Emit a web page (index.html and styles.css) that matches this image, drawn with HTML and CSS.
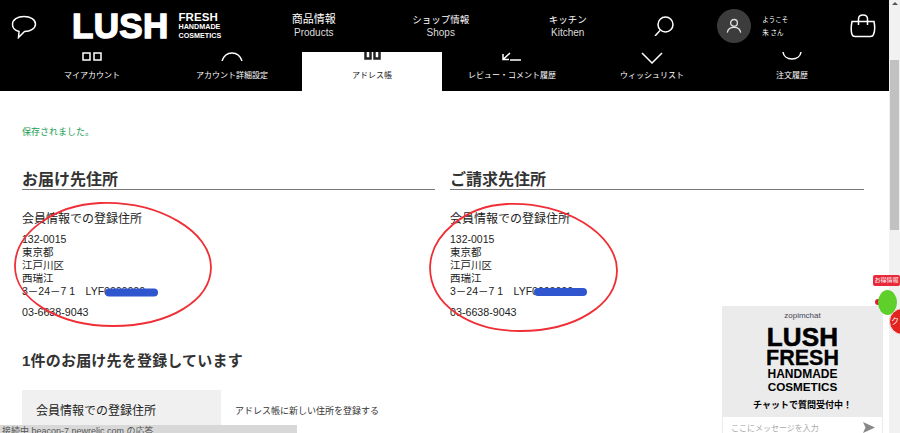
FILE: index.html
```html
<!DOCTYPE html>
<html lang="ja">
<head>
<meta charset="utf-8">
<title>アドレス帳</title>
<link rel="stylesheet" href="styles.css">
</head>
<body>
<div class="page">
  <main class="main">
    <header class="topbar">
      <svg class="ico-chat" viewBox="0 0 26 24"><path d="M13 1.5C6.500 1.5 1.500 4.500 1.500 9.500c0 3.500 2.500 6 6.500 7l-.5 6 6-6c6 0 11-3 11-7.500 0-4.500-5-7.500-11.500-7.500z"/></svg>
      <div class="logo">
        <span class="logo-lush">LUSH</span>
        <span class="logo-sub"><b class="l1">FRESH</b><b class="l2">HANDMADE</b><b class="l3">COSMETICS</b></span>
      </div>
      <nav class="gnav">
        <a class="gnav-item"><b>商品情報</b><span>Products</span></a>
        <a class="gnav-item"><b>ショップ情報</b><span>Shops</span></a>
        <a class="gnav-item"><b>キッチン</b><span>Kitchen</span></a>
      </nav>
      <svg class="ico-search" viewBox="0 0 20 20"><circle cx="11.500" cy="8.500" r="7.500"/><path d="M6 14.500L1 20"/></svg>
      <div class="user">
        <span class="avatar"><svg viewBox="0 0 18 18"><circle cx="9" cy="5.500" r="3.800"/><path d="M1.500 16.500c.5-4 3.500-6 7.500-6s7 2 7.500 6"/></svg></span>
        <span class="hello">ようこそ<br>朱 さん</span>
      </div>
      <svg class="ico-bag" viewBox="0 0 26 24"><path d="M2 7.500h22c1 5 .8 10-.5 13-.5 1.500-1.500 2-3 2H5c-1.500 0-2.500-.5-3-2-1-3-1-8 0-13z"/><path d="M8.500 11V5c0-2.500 2-4 4.500-4s4.500 1.500 4.500 4v6"/></svg>
    </header>
    <nav class="subnav">
      <a class="tab"><span class="tab-ico"><svg viewBox="0 0 20 9" width="20" height="9"><rect x="1" y="1" width="7" height="7"/><rect x="12" y="1" width="7" height="7"/></svg></span>マイアカウント</a>
      <a class="tab"><span class="tab-ico"><svg viewBox="0 0 22 9" width="22" height="9"><path d="M1 9C3 3 7 1 11 1s8 2 10 8"/></svg></span>アカウント詳細設定</a>
      <a class="tab tab-on"><span class="tab-ico"><svg class="thick" viewBox="0 0 17 8" width="17" height="8"><path d="M1.500 0v6.500h5V0M10.500 0v6.500h5V0"/></svg></span>アドレス帳</a>
      <a class="tab"><span class="tab-ico"><svg viewBox="0 0 20 9" width="20" height="9"><path d="M1 7.500L8 1M1 2v5.500h6M8 8h11"/></svg></span>レビュー・コメント履歴</a>
      <a class="tab"><span class="tab-ico"><svg viewBox="0 0 22 12" width="22" height="12"><path d="M1 1l10 10L21 1"/></svg></span>ウィッシュリスト</a>
      <a class="tab"><span class="tab-ico"><svg viewBox="0 0 20 9" width="20" height="9"><path d="M1 0c.5 4 4 7 9 7s8.500-3 9-7"/></svg></span>注文履歴</a>
    </nav>
    <section class="content">
      <p class="saved">保存されました。</p>
      <div class="cols">
        <div class="col">
          <h2 class="col-title">お届け先住所</h2>
          <h3 class="addr-title">会員情報での登録住所</h3>
          <p class="addr">132-0015<br>東京都<br>江戸川区<br>西瑞江<br>3－24－7 1　LYF0000000</p>
          <p class="tel">03-6638-9043</p>
        </div>
        <div class="col">
          <h2 class="col-title">ご請求先住所</h2>
          <h3 class="addr-title">会員情報での登録住所</h3>
          <p class="addr">132-0015<br>東京都<br>江戸川区<br>西瑞江<br>3－24－7 1　LYF0000000</p>
          <p class="tel">03-6638-9043</p>
        </div>
      </div>
      <h2 class="count">1件のお届け先を登録しています</h2>
      <div class="book">
        <div class="book-card">会員情報での登録住所</div>
        <p class="book-add">アドレス帳に新しい住所を登録する</p>
      </div>
    </section>
  </main>
  <div class="scrollbar">
    <span class="sb-arrow"></span>
    <span class="sb-thumb"></span>
  </div>

  <svg class="marks" viewBox="0 0 900 433">
    <path class="mark-blue" d="M109 292.500h45"/>
    <path class="mark-blue" d="M538 292h45"/>
    <path class="mark-red" d="M100 203C55 205 16 232 15 265c-1 35 45 61 98 61 57 0 98-26 98-59 0-35-51-66-111-64z"/>
    <path class="mark-red" d="M507 204c-42 2-76 31-77 63 0 38 40 64 90 64 55 0 97-26 97-61 0-35-52-69-110-66z"/>
  </svg>

  <aside class="chat">
    <div class="chat-brand">zopimchat</div>
    <div class="chat-logo"><b class="c1">LUSH</b><b class="c2">FRESH</b><b class="c3">HANDMADE</b><b class="c4">COSMETICS</b></div>
    <div class="chat-msg">チャットで質問受付中！</div>
    <div class="chat-input"><span>ここにメッセージを入力</span><svg viewBox="0 0 12 11" width="12" height="11"><path d="M0 0l12 5.500L0 11l2.500-5.500z"/></svg></div>
  </aside>

  <div class="promo">
    <span class="promo-tag">お得情報</span>
    <span class="promo-dot"></span>
    <span class="promo-body"></span>
    <span class="promo-coin">ク</span>
  </div>

  <div class="status">接続中 beacon-7.newrelic.com の応答...</div>
</div>
</body>
</html>
```
FILE: styles.css
```css
* { box-sizing: border-box; }
html, body { margin: 0; height: 100%; overflow: hidden; }
body {
  background: #fff;
  color: #222;
  font-family: "Liberation Sans", "Noto Sans CJK JP", sans-serif;
}
.page { position: relative; display: flex; width: 900px; height: 433px; overflow: hidden; }
.main { width: 889px; flex: none; }

.topbar {
  height: 52px;
  background: #000;
  display: flex;
  align-items: center;
  padding-left: 11px;
  color: #fff;
}
svg { display: block; }
.topbar svg, .tab-ico svg { fill: none; stroke: currentColor; stroke-width: 1.5; }
.ico-chat { width: 26px; height: 24px; margin-top: 2px; }
.logo { display: flex; align-items: center; margin-left: 35px; gap: 10px; }
.logo-lush { font-size: 35px; line-height: 26px; font-weight: 700; letter-spacing: .3px; -webkit-text-stroke: 1.400px #fff; }
.logo-sub { display: flex; flex-direction: column; }
.logo-sub b { display: block; line-height: 8.500px; }
.logo-sub .l1 { font-size: 11.500px; line-height: 11px; letter-spacing: .1px; }
.logo-sub .l2, .logo-sub .l3 { font-size: 7.200px; }
.gnav { display: flex; margin-left: 29px; }
.gnav-item {
  width: 127px;
  display: flex;
  flex-direction: column;
  align-items: center;
  font-size: 9.500px;
  line-height: 13px;
}
.gnav-item b { font-weight: 400; }
.gnav-item:first-child b { font-size: 11px; }
.gnav-item span { color: #ddd; font-size: 10px; }
.ico-search { width: 20px; height: 20px; margin-left: 23px; }
.user { display: flex; align-items: center; margin-left: 43px; gap: 11px; }
.avatar {
  width: 34px; height: 34px;
  border-radius: 50%;
  background: #3c3c3c;
  display: flex; align-items: center; justify-content: center;
}
.avatar svg { width: 16px; height: 16px; stroke: #ddd; }
.hello { font-size: 6.500px; line-height: 13px; }
.ico-bag { width: 26px; height: 24px; margin-left: auto; margin-right: 13px; }

.subnav {
  height: 39px;
  background: #000;
  display: flex;
  padding-left: 22px;
}
.tab {
  width: 140px;
  display: flex;
  flex-direction: column;
  align-items: center;
  color: #fff;
  font-size: 8px;
  line-height: 12px;
}
.tab-ico { height: 10px; margin-bottom: 8px; display: flex; align-items: flex-start; overflow: visible; }
.tab-on { background: #fff; color: #222; }
.tab-ico .thick { stroke-width: 2.500; }

.content { padding: 34px 25px 0 22px; }
.saved { margin: 0; color: #1a9e50; font-size: 9px; line-height: 14px; }
.cols { display: grid; grid-template-columns: 413px 414px; column-gap: 15px; margin-top: 29px; }
.col-title {
  margin: 0;
  height: 22px;
  padding-top: 2px;
  border-bottom: 1px solid #777;
  font-size: 16px;
  line-height: 20px;
  font-weight: 700;
  color: #333;
}
.addr-title { margin: 20px 0 0; font-size: 12px; line-height: 18px; font-weight: 400; }
.addr { margin: 5px 0 0; font-size: 10.500px; line-height: 13px; }
.tel { margin: 8px 0 0; font-size: 10.700px; line-height: 13px; }
.count { margin: 32px 0 0; font-size: 15px; line-height: 20px; font-weight: 700; color: #333; letter-spacing: .2px; }
.book { display: flex; align-items: flex-start; margin-top: 19px; gap: 14px; }
.book-card {
  width: 199px;
  height: 60px;
  background: #f0f0f0;
  padding: 12px 14px;
  font-size: 12px;
  line-height: 18px;
}
.book-add { margin: 14px 0 0; font-size: 9px; line-height: 14px; color: #333; }

.scrollbar {
  flex: none;
  width: 11px;
  background: #f1f1f1;
  padding: 2px 1px 0;
  display: flex;
  flex-direction: column;
  align-items: center;
}
.sb-arrow { width: 0; height: 0; border: 3px solid transparent; border-top: 0; border-bottom: 3px solid #555; }
.sb-thumb { width: 9px; height: 170px; background: #c1c1c1; margin-top: 55px; }

.marks { position: absolute; inset: 0; width: 900px; height: 433px; fill: none; pointer-events: none; }
.mark-red { stroke: #ef2f35; stroke-width: 1.800; }
.mark-blue { stroke: #2f55cf; stroke-width: 8; stroke-linecap: round; }

.chat {
  position: absolute;
  left: 722px; top: 306px;
  width: 161px; height: 127px;
  background: #ebebeb;
  display: flex;
  flex-direction: column;
  align-items: center;
  color: #000;
}
.chat-brand { font-size: 8px; line-height: 10px; margin-top: 5px; color: #445; }
.chat-logo { display: flex; flex-direction: column; align-items: center; width: 72px; margin-top: 6px; }
.chat-logo b { display: block; white-space: nowrap; }
.chat-logo .c1 { font-size: 26px; line-height: 20px; -webkit-text-stroke: .6px #000; letter-spacing: .2px; }
.chat-logo .c2 { font-size: 21.500px; line-height: 20px; margin-top: 1px; -webkit-text-stroke: .3px #000; }
.chat-logo .c3 { font-size: 12px; line-height: 12px; }
.chat-logo .c4 { font-size: 11.700px; line-height: 12px; margin-top: 1px; }
.chat-msg { font-size: 9px; line-height: 14px; font-weight: 700; margin-top: 5px; }
.chat-input {
  position: absolute;
  left: 1px; right: 1px; bottom: 0;
  height: 16px;
  background: #fff;
  display: flex;
  align-items: center;
  justify-content: space-between;
  padding: 4px 7px 0 8px;
  color: #aaa;
  font-size: 8px;
}
.chat-input svg { fill: #888; }

.promo { position: absolute; left: 870px; top: 272px; width: 30px; height: 66px; overflow: hidden; }
.promo-tag {
  position: absolute; left: 3px; top: 3px;
  width: 27px; height: 11px;
  background: #e8293a;
  border-radius: 2px;
  color: #fff; font-size: 6px; line-height: 11px; text-align: center; white-space: nowrap; overflow: hidden;
}
.promo-dot { position: absolute; left: 5px; top: 27px; width: 6px; height: 6px; border-radius: 50%; background: #d8232f; }
.promo-body { position: absolute; left: 8px; top: 18px; width: 19px; height: 25px; border-radius: 50%; background: #5fcf2b; }
.promo-coin {
  position: absolute; left: 19px; top: 36px;
  width: 27px; height: 27px;
  border-radius: 50%;
  background: #e2231f;
  border: 1px solid #f3d6d6;
  color: #fff; font-size: 8px; line-height: 25px; padding-left: 1px;
}

.status {
  position: absolute;
  left: 0; bottom: 0;
  width: 297px; height: 8px;
  padding-left: 2px;
  background: #d8d8d8;
  color: #555;
  font-size: 9px;
  line-height: 12px;
  white-space: nowrap;
  overflow: hidden;
}
```
